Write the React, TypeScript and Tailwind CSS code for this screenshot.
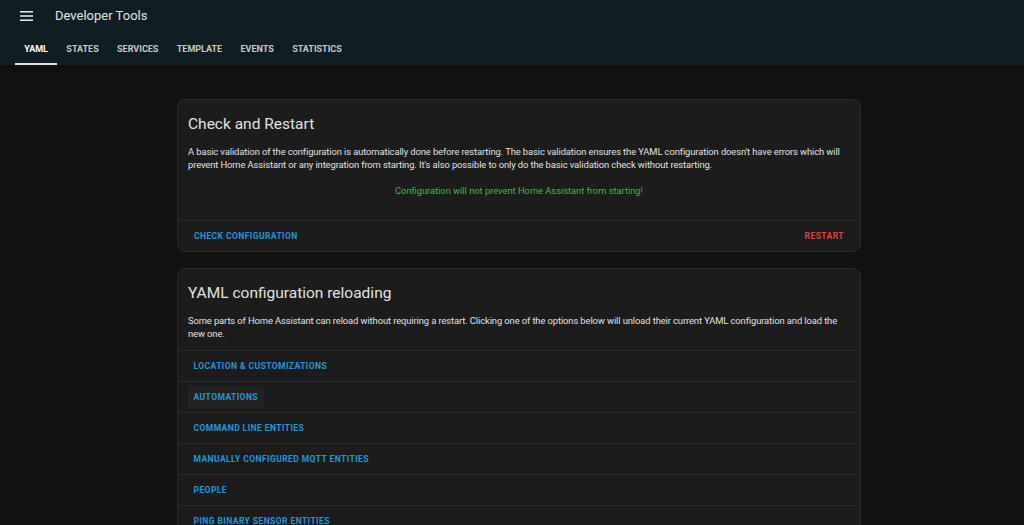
import React from "react";

const reloads = [
  "LOCATION & CUSTOMIZATIONS",
  "AUTOMATIONS",
  "COMMAND LINE ENTITIES",
  "MANUALLY CONFIGURED MQTT ENTITIES",
  "PEOPLE",
  "PING BINARY SENSOR ENTITIES",
  "SCENES",
];

const tabs = ["YAML", "STATES", "SERVICES", "TEMPLATE", "EVENTS", "STATISTICS"];

export default function App() {
  return (
    <div className="h-[525px] overflow-hidden bg-[#111111] font-['Roboto',sans-serif]">
      <header className="bg-[#101e24] h-[65px] flex flex-col">
        <div className="h-[31px] flex items-center pl-[20px]">
          <svg width="13" height="10" viewBox="0 0 13 10" className="block">
            <rect x="0" y="0" width="13" height="1.6" fill="#e1e1e1" />
            <rect x="0" y="4.2" width="13" height="1.6" fill="#e1e1e1" />
            <rect x="0" y="8.4" width="13" height="1.6" fill="#e1e1e1" />
          </svg>
          <span className="ml-[22px] text-[13px] text-[#e1e1e1] leading-none">Developer Tools</span>
        </div>
        <nav className="flex pl-[15px] h-[34px]">
          {tabs.map((t, i) => (
            <div
              key={t}
              className={`px-[9.2px] pt-[6px] flex items-center text-[9px] font-bold border-b-2 ${
                i === 0 ? "text-white border-[#e1e1e1]" : "text-[#c8c8c8] border-transparent"
              }`}
            >
              {t}
            </div>
          ))}
        </nav>
      </header>

      <main className="pl-[177px] pt-[34px] flex flex-col gap-[16px]">
        <section className="w-[684px] rounded-[8px] border border-[#2a2a2a] bg-[#1c1c1c]">
          <h2 className="px-[10px] pt-[13px] text-[15.5px] text-[#e1e1e1] leading-[22px]">Check and Restart</h2>
          <p className="px-[10px] pt-[10px] text-[9.4px] tracking-[-0.1px] leading-[13px] text-[#e1e1e1]">
            A basic validation of the configuration is automatically done before restarting. The basic validation ensures the YAML configuration doesn't have errors which will prevent Home Assistant or any integration from starting. It's also possible to only do the basic validation check without restarting.
          </p>
          <div className="pt-[13px] pb-[23px] text-center text-[9.3px] leading-[13px] text-[#4caf50]">
            Configuration will not prevent Home Assistant from starting!
          </div>
          <div className="border-t border-[#2a2a2a] h-[31px] flex items-center justify-between px-[16px]">
            <span className="text-[8.5px] font-bold tracking-[0.05em] text-[#2196d8]">CHECK CONFIGURATION</span>
            <span className="text-[8.5px] font-bold tracking-[0.05em] text-[#db4437]">RESTART</span>
          </div>
        </section>

        <section className="w-[684px] rounded-[8px] border border-[#2a2a2a] bg-[#1c1c1c]">
          <h2 className="px-[10px] pt-[13px] text-[15.5px] text-[#e1e1e1] leading-[22px]">YAML configuration reloading</h2>
          <p className="px-[10px] pt-[10px] pb-[10px] text-[9.4px] tracking-[-0.1px] leading-[13px] text-[#e1e1e1]">
            Some parts of Home Assistant can reload without requiring a restart. Clicking one of the options below will unload their current YAML configuration and load the new one.
          </p>
          {reloads.map((r, i) => (
            <div key={r} className="border-t border-[#2a2a2a] h-[31px] flex items-center px-[10px]">
              <span
                className={`px-[5.5px] h-[23px] flex items-center rounded-[3px] text-[8.5px] font-bold tracking-[0.05em] text-[#2196d8] ${
                  i === 1 ? "bg-[#222222]" : ""
                }`}
              >
                {r}
              </span>
            </div>
          ))}
        </section>
      </main>
    </div>
  );
}
